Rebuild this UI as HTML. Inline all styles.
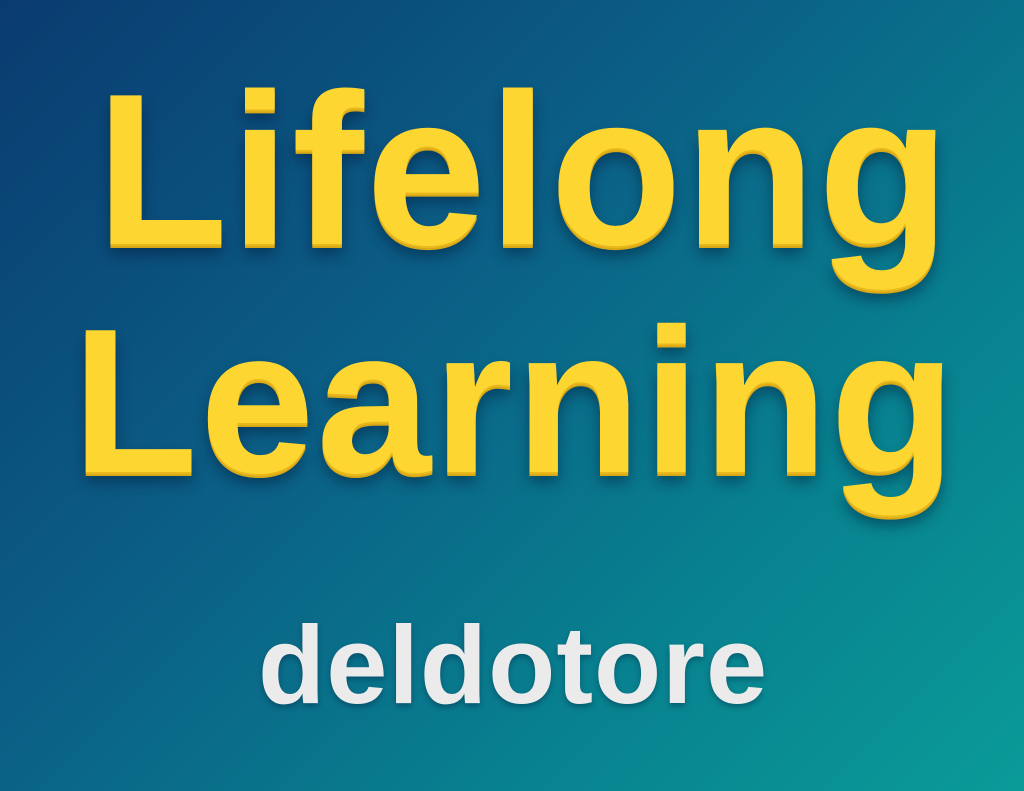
<!DOCTYPE html>
<html><head><meta charset="utf-8"><style>
html,body{margin:0;padding:0}
body{width:1024px;height:791px;overflow:hidden;position:relative;
background:linear-gradient(135deg,#0a3b70 0%,#0b5f86 40%,#08808f 70%,#0a9b98 100%);
font-family:"Liberation Sans",sans-serif;font-weight:bold}
.t{position:absolute;left:0;width:1100px;line-height:1;white-space:nowrap}
.y{color:#fdd631;text-shadow:0 2px 0 #e8b81c,0 4px 0 #d9a817,0 10px 14px rgba(0,20,50,.45)}
</style></head><body>
<div class="t y" style="top:61px;left:96px;font-size:216px;letter-spacing:2px">Lifelong</div>
<div class="t y" style="top:298px;left:72px;font-size:206px;letter-spacing:2px">Learning</div>
<div class="t" style="top:611px;left:258px;font-size:110px;letter-spacing:1px;color:#ebebeb;text-shadow:0 3px 6px rgba(0,20,50,.35)">deldotore</div>
</body></html>
